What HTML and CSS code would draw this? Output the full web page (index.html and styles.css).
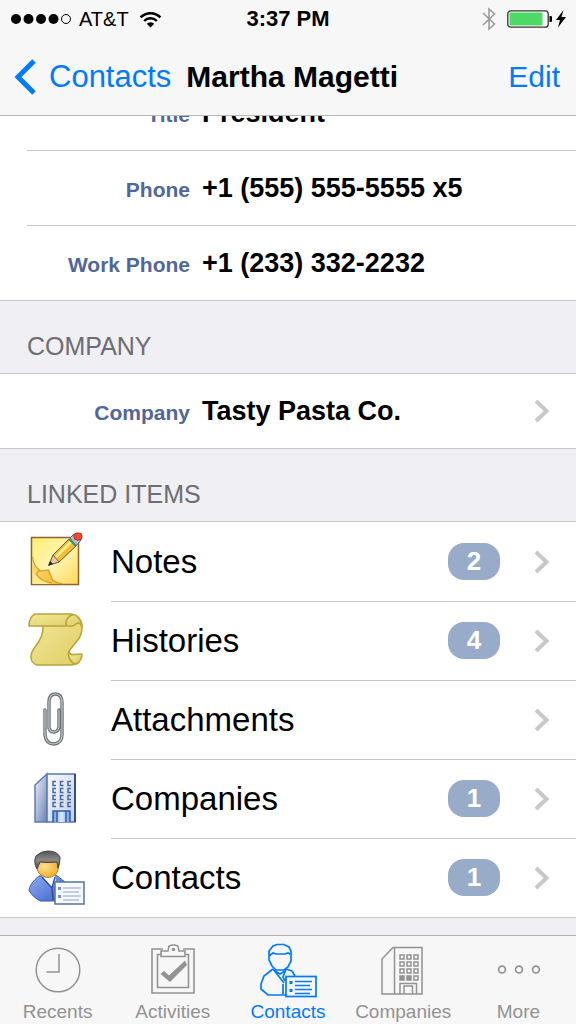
FILE: index.html
```html
<!DOCTYPE html>
<html lang="en">
<head>
<meta charset="utf-8">
<meta name="viewport" content="width=device-width, initial-scale=1">
<title>Martha Magetti</title>
<link rel="stylesheet" href="styles.css">
</head>
<body>
<svg class="defs" aria-hidden="true">
  <defs>
    <symbol id="chevron" viewBox="0 0 16 24"><path d="M2 2l10.500 10L2 22" fill="none" stroke="#c7c7cc" stroke-width="4"/></symbol>
    <linearGradient id="note" x1="0" y1="0" x2="1" y2="1"><stop offset="0" stop-color="#ffee70"/><stop offset=".5" stop-color="#fff5b4"/><stop offset="1" stop-color="#ffd858"/></linearGradient>
    <linearGradient id="fold" x1="0" y1="0" x2="1" y2="0"><stop offset="0" stop-color="#ffd768"/><stop offset="1" stop-color="#f0b630"/></linearGradient>
    <linearGradient id="scroll" x1="0" y1="0" x2="1" y2="1"><stop offset="0" stop-color="#f1e896"/><stop offset="1" stop-color="#e0cd68"/></linearGradient>
    <linearGradient id="side" x1="0" y1="0" x2="1" y2="1"><stop offset="0" stop-color="#eef2fb"/><stop offset="1" stop-color="#6681b5"/></linearGradient>
    <linearGradient id="front" x1="0" y1="0" x2="1" y2="1"><stop offset="0" stop-color="#f8faff"/><stop offset="1" stop-color="#c3cfe8"/></linearGradient>
    <linearGradient id="door" x1="0" y1="0" x2="1" y2="0"><stop offset="0" stop-color="#6c9bed"/><stop offset=".5" stop-color="#dcebff"/><stop offset="1" stop-color="#6c9bed"/></linearGradient>
    <linearGradient id="coat" x1="0" y1="0" x2="1" y2="1"><stop offset="0" stop-color="#91adf0"/><stop offset="1" stop-color="#3d62cc"/></linearGradient>
    <radialGradient id="face" cx=".35" cy=".35" r=".8"><stop offset="0" stop-color="#ffe08c"/><stop offset="1" stop-color="#eda41c"/></radialGradient>
    <linearGradient id="hair" x1="0" y1="0" x2="0" y2="1"><stop offset="0" stop-color="#555"/><stop offset=".5" stop-color="#8a8a8a"/><stop offset="1" stop-color="#4c4c4c"/></linearGradient>
  </defs>
</svg>
<div class="screen">
  <header class="header">
    <div class="status">
      <div class="status-left">
        <svg class="signal" viewBox="0 0 62 14" aria-hidden="true"><circle cx="6" cy="7" r="5"/><circle cx="18.500" cy="7" r="5"/><circle cx="31" cy="7" r="5"/><circle cx="43.500" cy="7" r="5"/><circle cx="56" cy="7" r="4.500" fill="none" stroke="#000"/></svg>
        <span class="carrier">AT&amp;T</span>
        <svg class="wifi" viewBox="0 0 24 18" aria-hidden="true"><g fill="none" stroke="#000" stroke-width="2.600"><path d="M1.500 6.800a14.500 14.500 0 0 1 21 0"/><path d="M5.300 10.600a9.300 9.300 0 0 1 13.400 0"/></g><path d="M12 17.500l-4-4a5.600 5.600 0 0 1 8 0z"/></svg>
      </div>
      <time class="clock">3:37 PM</time>
      <div class="status-right">
        <svg class="bluetooth" viewBox="0 0 14 24" aria-hidden="true"><path d="M1 6l11.500 11L7 22V2l5.500 5L1 18" fill="none" stroke="#999" stroke-width="1.500"/></svg>
        <svg class="battery" viewBox="0 0 46 18" aria-hidden="true"><rect x=".8" y=".8" width="40.400" height="16.400" rx="3" fill="#fff" stroke="#333" stroke-width="1.300"/><rect x="2.500" y="2.500" width="33" height="13" rx="1" fill="#4cd964"/><path d="M42.500 6h1.300q1.200 0 1.200 1.300v3.400q0 1.300-1.200 1.300h-1.300z"/></svg>
        <svg class="bolt" viewBox="0 0 10 18" aria-hidden="true"><path d="M7.500 0L0 10h4l-2 7.500L10 7H5.500z"/></svg>
      </div>
    </div>
    <nav class="navbar">
      <a class="back" href="#contacts"><svg class="back-icon" viewBox="0 0 22 36" aria-hidden="true"><path d="M20 2L4 18l16 16" fill="none" stroke="#007aff" stroke-width="5"/></svg>Contacts</a>
      <h1 class="title">Martha Magetti</h1>
      <button class="edit" type="button">Edit</button>
    </nav>
  </header>

  <main class="content">
    <dl class="group scrolled">
      <div class="field"><dt>Title</dt><dd>President</dd></div>
      <div class="field"><dt>Phone</dt><dd>+1 (555) 555-5555 x5</dd></div>
      <div class="field"><dt>Work Phone</dt><dd>+1 (233) 332-2232</dd></div>
    </dl>
    <h2 class="section">COMPANY</h2>
    <div class="group">
      <a class="field" href="#company"><span class="label">Company</span><span class="value">Tasty Pasta Co.</span><svg class="chevron" aria-hidden="true"><use href="#chevron"/></svg></a>
    </div>
    <h2 class="section">LINKED ITEMS</h2>
    <div class="group">
      <a class="item" href="#notes">
        <svg class="item-icon" viewBox="0 0 60 60" aria-hidden="true"><rect x="4.500" y="5.500" width="47" height="47" fill="url(#note)" stroke="#94612b" stroke-width="1.500"/><path d="M5.500 25q1 9 8 14l8-1q2 5 4 10 4 3 10 4H5.500z" fill="url(#fold)"/><path d="M5.500 25q1 9 8 14l8-1q2 5 4 10 4 3 10 4M13 39q-4 1-3 4 4 6 15 8" fill="none" stroke="#d39a25" stroke-width="1.200"/><path d="M6 40q6 9 17 12H6z" fill="#ffec92"/><path d="M22 33l4-10L42 7l7 7-17 16z" fill="#f1bd36" stroke="#795122"/><path d="M29 25L44 10" stroke="#ffef9b" stroke-width="2.500"/><path d="M22 33l4-10 6 7z" fill="#e8c9a5" stroke="#7b654e"/><path d="M21 34l2-5 3 3z" fill="#222"/><path d="M43 6l4-4 7 6-5 6z" fill="#b4c0c8" stroke="#526a75"/><path d="M42 7l7 7" stroke="#32936c" stroke-width="2"/><rect x="47" y="1" width="8" height="7" rx="3" fill="#f04c34" stroke="#b72820"/></svg>
        <span class="name">Notes</span><span class="badge">2</span><svg class="chevron" aria-hidden="true"><use href="#chevron"/></svg></a>
      <a class="item" href="#histories">
        <svg class="item-icon" viewBox="0 0 60 60" aria-hidden="true"><g fill="url(#scroll)" stroke="#b8a438" stroke-width="1.500" stroke-linejoin="round"><path d="M14 12H38L44 4Q55 6 55 16 55 25 50 30L42 40 44 46 52 51Q49 54 43 54H10Q4 52 4 46 4 41 8 36 17 25 16 14z"/><path d="M42 40Q42 44 46 43.500L55 43Q55 48 51 52 47 54 45 51 40 46 42 40z"/><path d="M8 3H44Q54 4 55 16 53 10 49 13 46 16 42 15 39 14 39 15H2Q2 6 8 3z"/><path d="M39 15Q38 6 46 3.500" fill="none"/></g></svg>
        <span class="name">Histories</span><span class="badge">4</span><svg class="chevron" aria-hidden="true"><use href="#chevron"/></svg></a>
      <a class="item" href="#attachments">
        <svg class="item-icon" viewBox="0 0 60 60" aria-hidden="true"><g fill="none" stroke-linecap="round"><path d="M18 20V45Q19 54 27 54 35 53 35 45V13Q35 4 28.500 4 22 4 22 12V38Q23 42 27 42 31 42 32 37V20" stroke="#697173" stroke-width="3.400"/><path d="M18 20V45Q19 54 27 54 35 53 35 45V13Q35 4 28.500 4 22 4 22 12V38Q23 42 27 42 31 42 32 37V20" stroke="#c4caca" stroke-width="1.200"/></g></svg>
        <span class="name">Attachments</span><svg class="chevron" aria-hidden="true"><use href="#chevron"/></svg></a>
      <a class="item" href="#companies">
        <svg class="item-icon" viewBox="0 0 60 60" aria-hidden="true"><path d="M8 53V16L20 5v48z" fill="url(#side)" stroke="#5f7cae" stroke-width="1.500"/><rect x="20" y="5" width="28" height="48" fill="url(#front)" stroke="#5877ad" stroke-width="1.500"/><path d="M48 5v48" stroke="#34507f" stroke-width="2"/><path d="M29 12.500h-3v4h3M36.500 12.500h-3v4h3M44 12.500h-3v4h3M29 19.500h-3v4h3M36.500 19.500h-3v4h3M44 19.500h-3v4h3M29 26.500h-3v4h3M36.500 26.500h-3v4h3M44 26.500h-3v4h3M29 33.500h-3v4h3M36.500 33.500h-3v4h3M44 33.500h-3v4h3" fill="none" stroke="#49699f" stroke-width="1.500"/><path d="M26 53V42h17v11M30 53V42M39 53V42" fill="url(#door)" stroke="#315ca9" stroke-width="1.500"/></svg>
        <span class="name">Companies</span><span class="badge">1</span><svg class="chevron" aria-hidden="true"><use href="#chevron"/></svg></a>
      <a class="item" href="#linked-contacts">
        <svg class="item-icon" viewBox="0 0 60 60" aria-hidden="true"><path d="M12 28Q2 36 2 43 7 50 13 53H30L38 45V34L29 27z" fill="url(#coat)" stroke="#395bb8"/><path d="M15 28l13-1 1 5-4 9z" fill="#fff"/><path d="M15 29l10 11 1 12M28 29l-3 11" fill="none" stroke="#2d4d9e" stroke-width="1.500"/><path d="M10 13Q9 24 14 27 21 32 28 27 32 24 32 13z" fill="url(#face)" stroke="#ba832b"/><path d="M10 21Q6 14 9 8 14 3 21 3 30 3 33 9 33 16 31 20L30 14Q21 15 13 14z" fill="url(#hair)" stroke="#454545"/><rect x="28" y="34" width="29" height="22" fill="#f6f9ff" stroke="#557595" stroke-width="1.500"/><path d="M36 40h18M36 44h16M36 48h18M36 52h16" stroke="#8aa2cc"/><path d="M31 40.500h3M31 48.500h3" stroke="#778fd0" stroke-width="3"/></svg>
        <span class="name">Contacts</span><span class="badge">1</span><svg class="chevron" aria-hidden="true"><use href="#chevron"/></svg></a>
    </div>
  </main>

  <nav class="tabs">
    <a class="tab" href="#recents"><svg class="tab-icon" viewBox="0 0 60 54" aria-hidden="true"><g fill="none" stroke="currentColor" stroke-width="1.500"><circle cx="30" cy="28" r="21.800"/><path d="M31 12v18H18.500"/></g></svg>Recents</a>
    <a class="tab" href="#activities"><svg class="tab-icon" viewBox="0 0 60 54" aria-hidden="true"><g fill="none" stroke="currentColor" stroke-width="1.600"><path d="M20 7H9v44h42V7H40"/><path d="M18 12.500H14.500v33h31v-33H42"/><path d="M18 14.500V9h7l1-5 3-1h3l3 1 1 5h6v5.500z"/></g><circle cx="30.500" cy="7.500" r="1.800" fill="currentColor"/><path d="M17.500 32l3.500-3 5 4.500L42 18.500l2 4.500L27 40z" fill="currentColor"/></svg>Activities</a>
    <a class="tab active" href="#contacts" aria-current="page"><svg class="tab-icon" viewBox="0 0 60 54" aria-hidden="true"><g fill="none" stroke="currentColor" stroke-width="1.700"><path d="M11 14V9l4-5 4-1.500h7L31 5l2 4v10l-3 6-4 3h-8l-4-4-3-6v-4l4-3 3 1h9l3-1 4 2"/><path d="M15 27L6 34 3 42v5l7 6H28M15 27l11 14M17 29l5 3 5-3M28 27l-3 8 2 4M28 27l6 2 3 5M25 52V42"/><rect x="28" y="34.500" width="30" height="20"/><path d="M37 39.500h17M37 43.500h15M37 47.500h17M37 51.500h15"/><path d="M31.500 40.500h3M31.500 48.500h3" stroke-width="3"/></g></svg>Contacts</a>
    <a class="tab" href="#companies"><svg class="tab-icon" viewBox="0 0 60 54" aria-hidden="true"><g fill="none" stroke="currentColor" stroke-width="1.500"><path d="M9 52V17L20 5.500h29V52zM21.500 6v46"/><path d="M27 13h4v4h-4zM34 13h4v4h-4zM41 13h4v4h-4zM27 20h4v4h-4zM34 20h4v4h-4zM41 20h4v4h-4zM27 27h4v4h-4zM34 27h4v4h-4zM41 27h4v4h-4zM41 34h4v4h-4z"/><path d="M27 34h4v4h-4zM34 34h4v4h-4z" fill="currentColor"/><path d="M27 52V41.500h16.500V52M31 52v-8h8.500v8"/></g></svg>Companies</a>
    <a class="tab" href="#more"><svg class="tab-icon" viewBox="0 0 60 54" aria-hidden="true"><g fill="none" stroke="currentColor" stroke-width="1.700"><circle cx="14" cy="27.500" r="3.400"/><circle cx="31" cy="27.500" r="3.400"/><circle cx="48" cy="27.500" r="3.400"/></g></svg>More</a>
  </nav>
</div>
</body>
</html>
```
FILE: styles.css
```css
* { box-sizing: border-box; }
body {
  margin: 0;
  font-family: "Liberation Sans", Arial, Helvetica, sans-serif;
  color: #000;
  background: #efeff4;
}
a { color: inherit; text-decoration: none; }
svg { display: block; flex: none; }
.defs { position: absolute; width: 0; height: 0; }

.screen { display: flex; flex-direction: column; height: 100vh; }
.header { flex: none; background: #f7f7f7; border-bottom: 1px solid #b8b8bb; }

.status {
  display: grid;
  grid-template-columns: 1fr auto 1fr;
  align-items: center;
  height: 38px;
  padding: 0 10px;
}
.status-left, .status-right { display: flex; align-items: center; }
.status-right { justify-content: flex-end; }
.signal { width: 62px; height: 14px; }
.carrier { margin: 0 10px 0 7px; font-size: 20px; }
.wifi { width: 23px; height: 17px; }
.clock { font-size: 22px; font-weight: bold; }
.bluetooth { width: 14px; height: 24px; margin-right: 11px; }
.battery { width: 46px; height: 18px; margin-right: 3px; }
.bolt { width: 10px; height: 18px; }

.navbar { display: flex; align-items: center; height: 77px; padding: 0 16px 0 14px; }
.back { display: flex; align-items: center; gap: 13px; font-size: 31px; color: #007aff; }
.back-icon { width: 22px; height: 36px; }
.title { flex: 1; margin: 0 0 0 15px; font-size: 30px; font-weight: bold; white-space: nowrap; }
.edit { padding: 0; border: 0; background: none; font: inherit; font-size: 30px; color: #007aff; }

.content { flex: 1; min-height: 0; overflow: hidden; }
.group { margin: 0; background: #fff; border-bottom: 1px solid #c8c7cc; }
.scrolled { margin-top: -40px; }

.field { position: relative; display: flex; align-items: center; height: 74px; padding-right: 26px; }
.field + .field { height: 75px; padding-top: 1px; }
.field + .field::before, .item + .item::before {
  content: "";
  position: absolute;
  top: 0;
  right: 0;
  left: 27px;
  border-top: 1px solid #c8c7cc;
}
.field dt, .label {
  width: 190px;
  padding-top: 3px;
  font-size: 21px;
  font-weight: bold;
  line-height: 24px;
  text-align: right;
  color: #51669a;
}
.field dd, .value { flex: 1; margin: 0 0 0 12px; font-size: 27px; font-weight: bold; }
.chevron { width: 16px; height: 24px; }

.section {
  margin: 0;
  padding: 31px 27px 13px;
  border-bottom: 1px solid #c8c7cc;
  font-size: 25px;
  font-weight: normal;
  line-height: 28px;
  color: #6d6d72;
}

.item { position: relative; display: flex; align-items: center; height: 79px; padding: 0 26px 0 27px; }
.item + .item::before { left: 111px; }
.item-icon { width: 60px; height: 60px; }
.name { flex: 1; margin-left: 24px; font-size: 33px; }
.badge {
  width: 52px;
  margin-right: 34px;
  border-radius: 16px;
  background: #98abc9;
  font-size: 26px;
  font-weight: bold;
  line-height: 37px;
  text-align: center;
  color: #fff;
}

.tabs {
  display: grid;
  grid-template-columns: repeat(5, 1fr);
  flex: none;
  height: 89px;
  border-top: 1px solid #b2b2b5;
  background: #f7f7f7;
}
.tab {
  display: flex;
  flex-direction: column;
  align-items: center;
  padding-top: 6px;
  font-size: 19px;
  line-height: 22px;
  color: #929292;
}
.tab-icon { width: 60px; height: 54px; margin-bottom: 5px; overflow: visible; }
.active { color: #007aff; }
```
